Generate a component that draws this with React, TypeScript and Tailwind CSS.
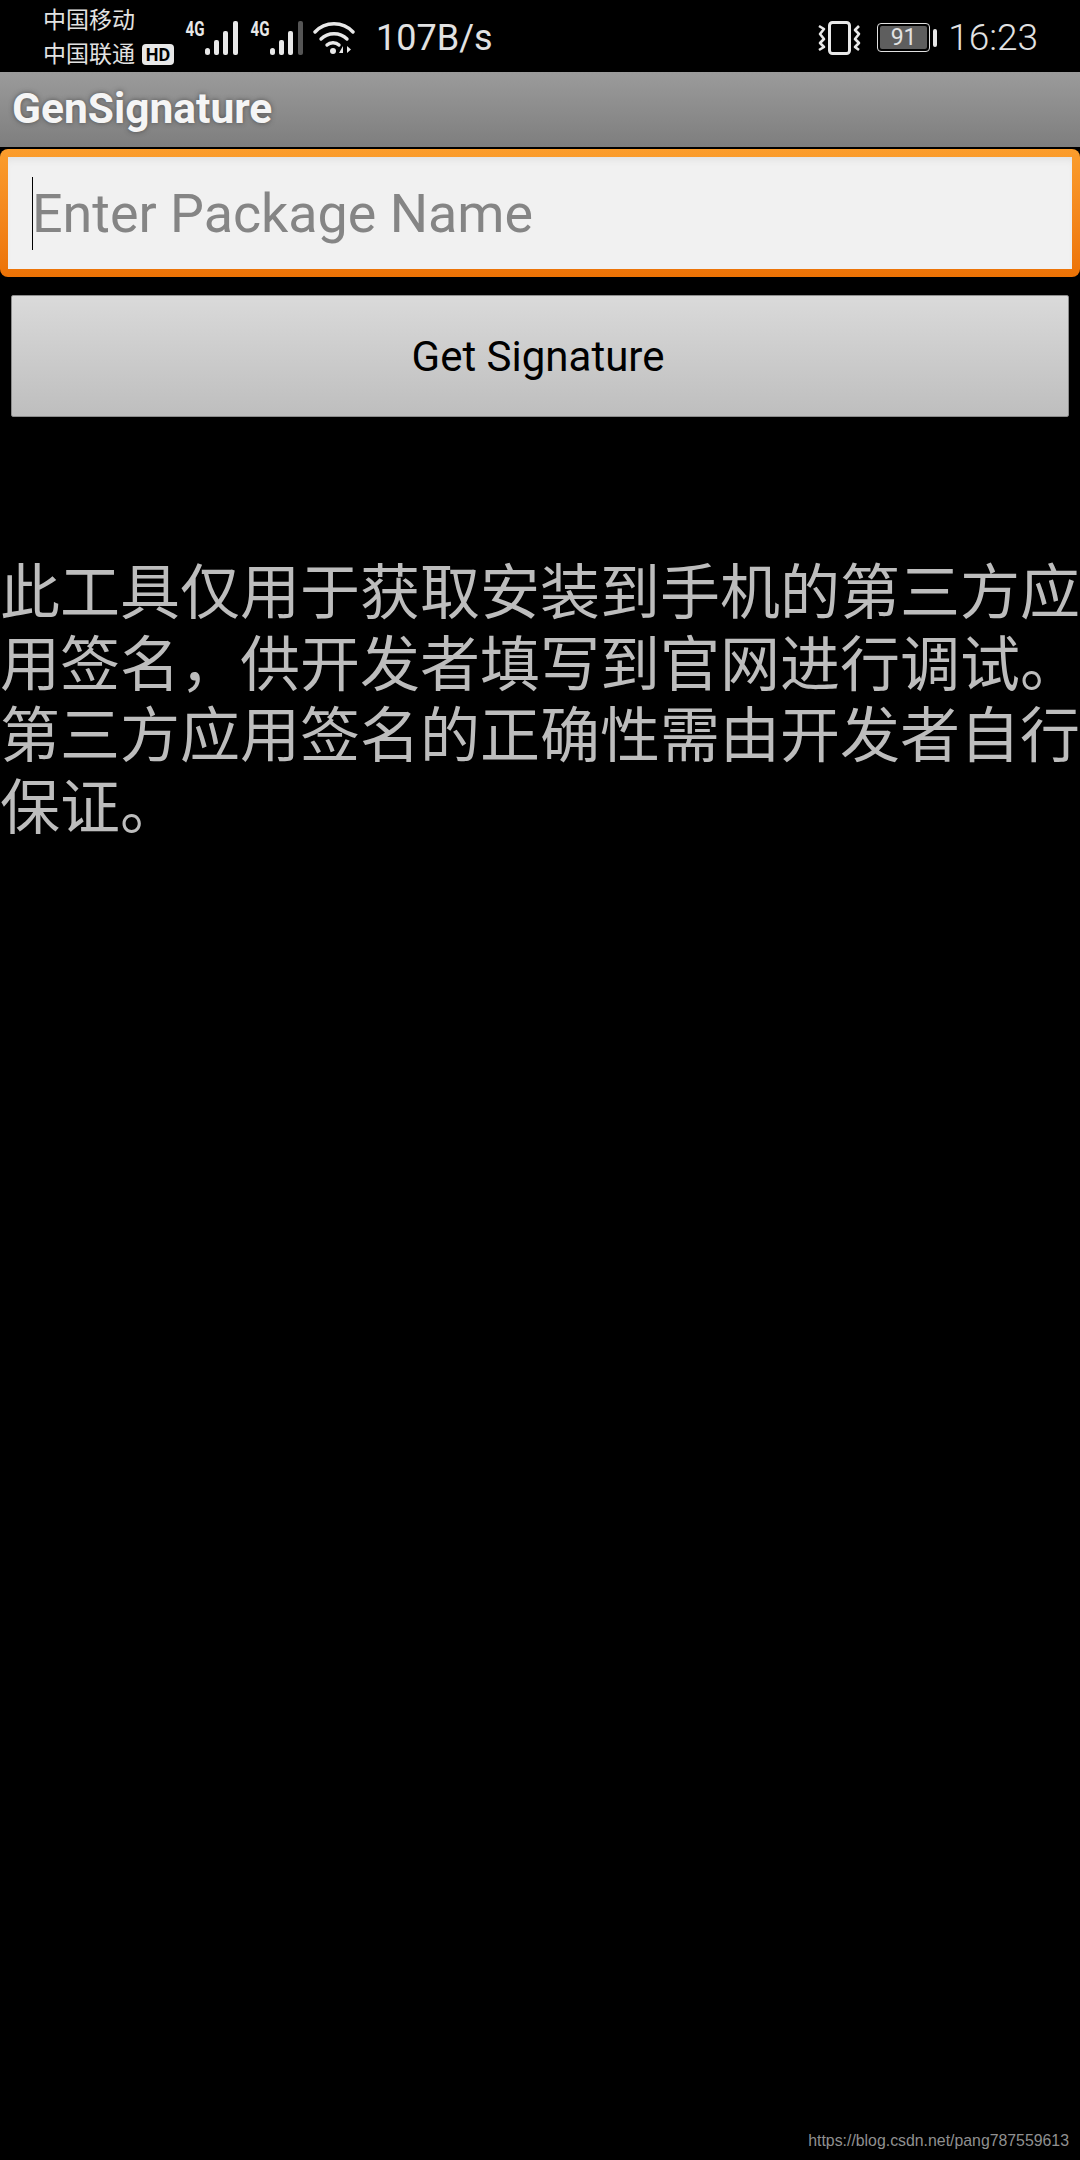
import React from 'react';

const CJK = "font-['Roboto','Noto_Sans_CJK_SC',sans-serif]";

const Signal: React.FC<{ dim?: boolean }> = ({ dim }) => (
  <svg width="52" height="36" viewBox="0 0 52 36" className="block overflow-visible">
    <text x="-2" y="16" fontFamily="Roboto, sans-serif" fontWeight="700" fontSize="21" fill="#e8e8e8" transform="scale(0.72 1)">4G</text>
    <rect x="18" y="28" width="5" height="7" rx="2.5" fill="#e8e8e8" />
    <rect x="27" y="20" width="5" height="15" rx="2" fill="#e8e8e8" />
    <rect x="36" y="11" width="5" height="24" rx="2" fill="#e8e8e8" />
    <rect x="46" y="1" width="5" height="34" rx="2" fill={dim ? '#555555' : '#e8e8e8'} />
  </svg>
);

const Wifi = () => (
  <svg width="42" height="36" viewBox="0 0 42 36" fill="none" stroke="#e8e8e8" strokeWidth="3.4" strokeLinecap="round" className="block">
    <path d="M2 12 C12 1 30 1 40 12" />
    <path d="M8 19 C15 12 27 12 34 19" />
    <path d="M14 25 C17 22 23 22 26 25" />
    <circle cx="20" cy="31" r="3" fill="#e8e8e8" stroke="none" />
    <path d="M30 33 V26 L26 33 Z M34 26 V33 L38 29.5 Z" fill="#e8e8e8" stroke="none" />
  </svg>
);

const Vibrate = () => (
  <svg width="44" height="34" viewBox="0 0 44 34" fill="none" stroke="#e8e8e8" className="block">
    <rect x="11.5" y="1.5" width="20" height="31" rx="3" strokeWidth="3" />
    <path d="M1 5 L6 8 L2 13 L6 18 L2 22 L6 26 L1 29" strokeWidth="2.6" strokeLinejoin="round" />
    <path d="M41 5 L37 9 L41 13 L37 18 L41 22 L37 26 L41 29" strokeWidth="2.6" strokeLinejoin="round" />
  </svg>
);

const App: React.FC = () => {
  return (
    <div className={`relative flex min-h-[2160px] w-[1080px] flex-col overflow-hidden bg-black ${CJK}`}>
      {/* status bar */}
      <div className="flex h-[72px] items-center pt-[3px] text-[#e2e2e2]">
        <div className="ml-[43px] flex w-[144px] flex-col text-[23px] leading-[34px]">
          <span>中国移动</span>
          <span className="flex items-center">
            中国联通
            <span className="ml-[7px] flex h-[21px] w-[32px] items-center justify-center rounded-[4px] bg-[#e8e8e8] text-[18px] font-bold leading-none text-black">HD</span>
          </span>
        </div>
        <div className="flex items-center gap-[13px]">
          <Signal />
          <Signal dim />
        </div>
        <div className="ml-[9px]">
          <Wifi />
        </div>
        <span className="ml-[21px] text-[36px] leading-none">107B/s</span>
        <div className="ml-auto">
          <Vibrate />
        </div>
        <div className="ml-[15px] flex items-center">
          <div className="flex h-[29px] w-[53px] items-center justify-center rounded-[4px] border border-[#e0e0e0] p-[2px]">
            <span className="flex h-full w-full items-center justify-center rounded-[2px] bg-[#5e5e5e] text-[23px] leading-none">91</span>
          </div>
          <div className="ml-[3px] h-[18px] w-[4px] rounded-[2px] bg-[#e8e8e8]" />
        </div>
        <span className="ml-[11px] mr-[42px] text-[37px] font-light leading-none">16:23</span>
      </div>

      {/* title bar */}
      <div className="flex h-[75px] items-center bg-gradient-to-b from-[#9b9b9b] to-[#7e7e7e] pl-[12px]">
        <span className="text-[42.5px] font-bold leading-none text-[#f5f5f5] [text-shadow:0_0_5px_rgba(50,50,50,0.7)]">GenSignature</span>
      </div>

      {/* package name field */}
      <div className="mt-[2px] rounded-[8px] bg-gradient-to-b from-[#fb9d2c] to-[#ec7205] p-[8px]">
        <div className="flex h-[112px] items-center bg-[#f1f1f1] pl-[24px] shadow-[inset_0_6px_8px_-4px_rgba(0,0,0,0.08)]">
          <div className="h-[73px] w-px bg-black" />
          <span className="-ml-px pt-[2px] text-[53.8px] leading-none text-[#858585]">Enter Package Name</span>
        </div>
      </div>

      {/* button */}
      <div className="mx-[11px] mt-[18px] flex h-[122px] items-center justify-center rounded-[2px] border border-[#8c8c8c] bg-gradient-to-b from-[#dadada] to-[#bebebe] pr-[4px] pt-[2px]">
        <span className="text-[42px] leading-none text-black">Get Signature</span>
      </div>

      <p className="mt-[141px] text-[60px] leading-[71.5px] text-[#bdbdbd]">
        此工具仅用于获取安装到手机的第三方应用签名，供开发者填写到官网进行调试。第三方应用签名的正确性需由开发者自行保证。
      </p>

      <span className="absolute bottom-[9px] right-[11px] font-['Liberation_Sans',sans-serif] text-[15.85px] leading-[20px] text-[#909090]">
        https://blog.csdn.net/pang787559613
      </span>
    </div>
  );
};

export default App;
